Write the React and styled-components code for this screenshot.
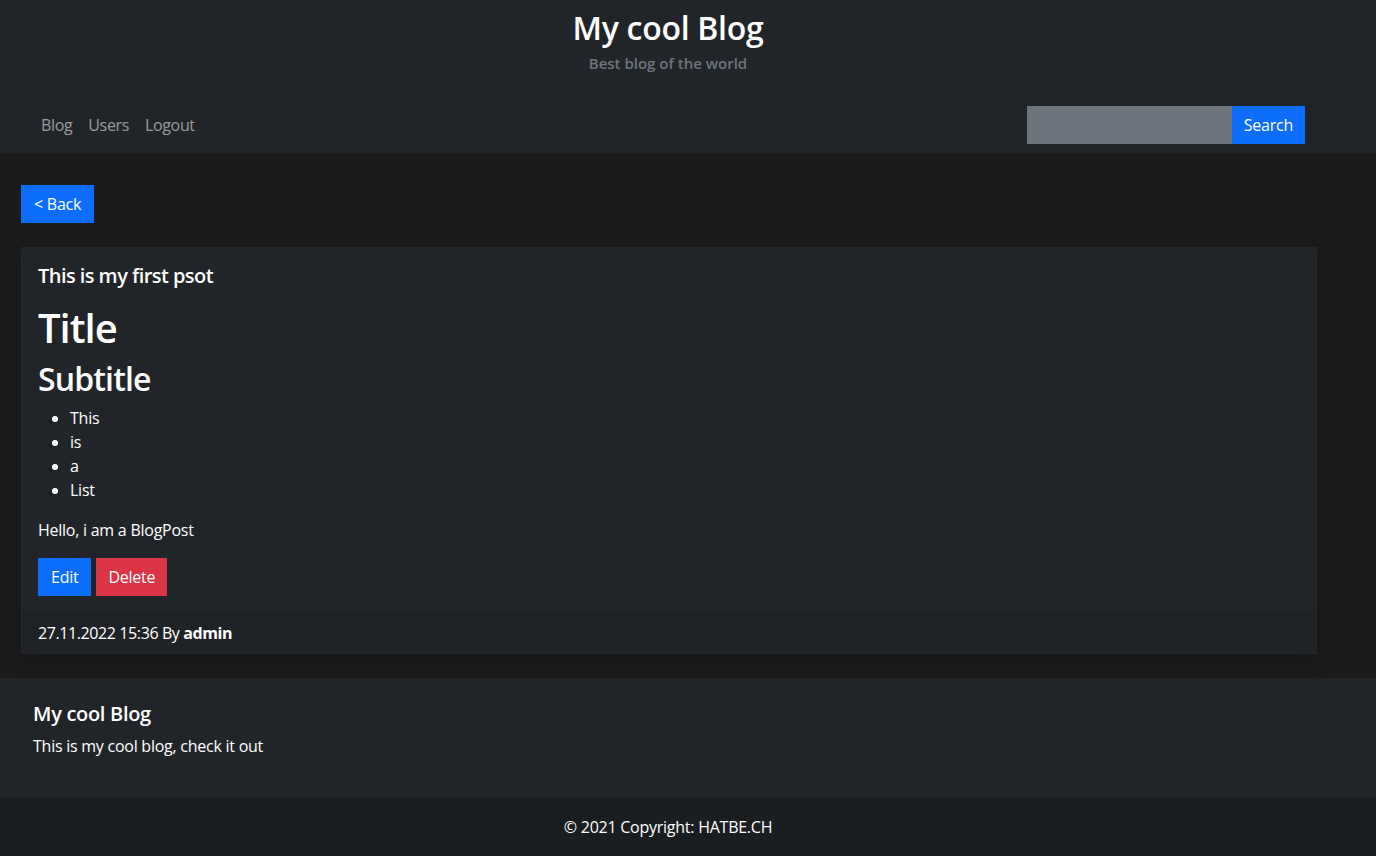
import React from "react";
import styled, { createGlobalStyle } from "styled-components";

const GlobalStyle = createGlobalStyle`
  html, body { margin: 0; padding: 0; }
  body {
    background: #1b1b1b;
    color: #ffffff;
    font-family: "Open Sans", "Noto Sans", sans-serif;
    font-size: 16px;
    line-height: 24px;
    letter-spacing: -0.25px;
  }
  * { box-sizing: border-box; }
`;

const Header = styled.header`
  background: #212529;
  padding: 9px 0 1px;
`;

const Brand = styled.div`
  text-align: center;
  padding-right: 40px;
`;

const BrandTitle = styled.h1`
  margin: 0 0 4px;
  font-size: 32px;
  line-height: 38px;
  font-weight: 600;
  letter-spacing: -0.3px;
  color: #fff;
`;

const BrandSub = styled.p`
  margin: 0;
  font-size: 15px;
  line-height: 24px;
  font-weight: 600;
  letter-spacing: 0;
  color: #6c757d;
`;

const NavBar = styled.nav`
  display: flex;
  align-items: center;
  justify-content: space-between;
  padding: 8px 71px 8px 33px;
  margin-top: 23px;
`;

const NavLinks = styled.div`
  display: flex;
`;

const NavLink = styled.a`
  padding: 0 8px;
  color: rgba(255, 255, 255, 0.55);
  text-decoration: none;
  font-size: 16px;
  line-height: 24px;
  letter-spacing: -0.35px;
`;

const SearchForm = styled.form`
  display: flex;
`;

const SearchInput = styled.input`
  width: 205px;
  height: 38px;
  border: none;
  border-radius: 0;
  background: #6c757d;
  color: #fff;
  padding: 6px 12px;
  font: inherit;
  outline: none;
`;

const Button = styled.button`
  height: 38px;
  padding: 6px ${(p) => (p.$wide ? "13px" : "12px")};
  border: none;
  border-radius: 0;
  background: ${(p) => (p.$variant === "danger" ? "#dc3545" : "#0d6efd")};
  color: #fff;
  font-family: inherit;
  font-size: 16px;
  line-height: 24px;
  letter-spacing: -0.25px;
  cursor: pointer;
`;

const Main = styled.main`
  padding: 32px 59px 24px 21px;
`;

const Card = styled.article`
  margin-top: 24px;
  background: #212529;
  border: 1px solid rgba(255, 255, 255, 0.012);
  box-shadow: 0 8px 16px rgba(0, 0, 0, 0.15);
`;

const CardBody = styled.div`
  padding: 16px;
`;

const CardTitle = styled.h5`
  margin: 0 0 16px;
  font-size: 20px;
  line-height: 24px;
  font-weight: 600;
  letter-spacing: -0.55px;
`;

const PostH1 = styled.h1`
  margin: 0 0 8px;
  font-size: 40px;
  line-height: 48px;
  font-weight: 600;
  letter-spacing: -1px;
`;

const PostH2 = styled.h2`
  margin: 0 0 8px;
  font-size: 32px;
  line-height: 38px;
  font-weight: 600;
  letter-spacing: -0.85px;
`;

const List = styled.ul`
  margin: 0 0 16px;
  padding-left: 32px;
`;

const Para = styled.p`
  margin: 0 0 16px;
`;

const Actions = styled.div`
  display: flex;
  gap: 5px;
`;

const CardFooter = styled.div`
  padding: 8px 16px;
  border-top: 1px solid rgba(0, 0, 0, 0.15);
  background: rgba(0, 0, 0, 0.03);
  letter-spacing: -0.4px;
`;

const SiteFooter = styled.footer`
  background: #212529;
`;

const FooterInner = styled.div`
  padding: 24px 33px;
`;

const FooterTitle = styled.h5`
  margin: 0 0 8px;
  font-size: 20px;
  line-height: 24px;
  font-weight: 600;
  letter-spacing: -0.3px;
`;

const FooterText = styled.p`
  margin: 0 0 16px;
`;

const Copyright = styled.div`
  background: #1b1e21;
  text-align: center;
  padding: 17px 40px 17px 0;
`;

export default function App() {
  return (
    <>
      <GlobalStyle />
      <Header>
        <Brand>
          <BrandTitle>My cool Blog</BrandTitle>
          <BrandSub>Best blog of the world</BrandSub>
        </Brand>
        <NavBar>
          <NavLinks>
            <NavLink href="#">Blog</NavLink>
            <NavLink href="#">Users</NavLink>
            <NavLink href="#">Logout</NavLink>
          </NavLinks>
          <SearchForm onSubmit={(e) => e.preventDefault()}>
            <SearchInput type="search" />
            <Button type="submit">Search</Button>
          </SearchForm>
        </NavBar>
      </Header>
      <Main>
        <Button $wide>&lt; Back</Button>
        <Card>
          <CardBody>
            <CardTitle>This is my first psot</CardTitle>
            <PostH1>Title</PostH1>
            <PostH2>Subtitle</PostH2>
            <List>
              <li>This</li>
              <li>is</li>
              <li>a</li>
              <li>List</li>
            </List>
            <Para>Hello, i am a BlogPost</Para>
            <Actions>
              <Button $wide>Edit</Button>
              <Button $variant="danger">Delete</Button>
            </Actions>
          </CardBody>
          <CardFooter>
            27.11.2022 15:36 By <b>admin</b>
          </CardFooter>
        </Card>
      </Main>
      <SiteFooter>
        <FooterInner>
          <FooterTitle>My cool Blog</FooterTitle>
          <FooterText>This is my cool blog, check it out</FooterText>
        </FooterInner>
        <Copyright>© 2021 Copyright: HATBE.CH</Copyright>
      </SiteFooter>
    </>
  );
}
